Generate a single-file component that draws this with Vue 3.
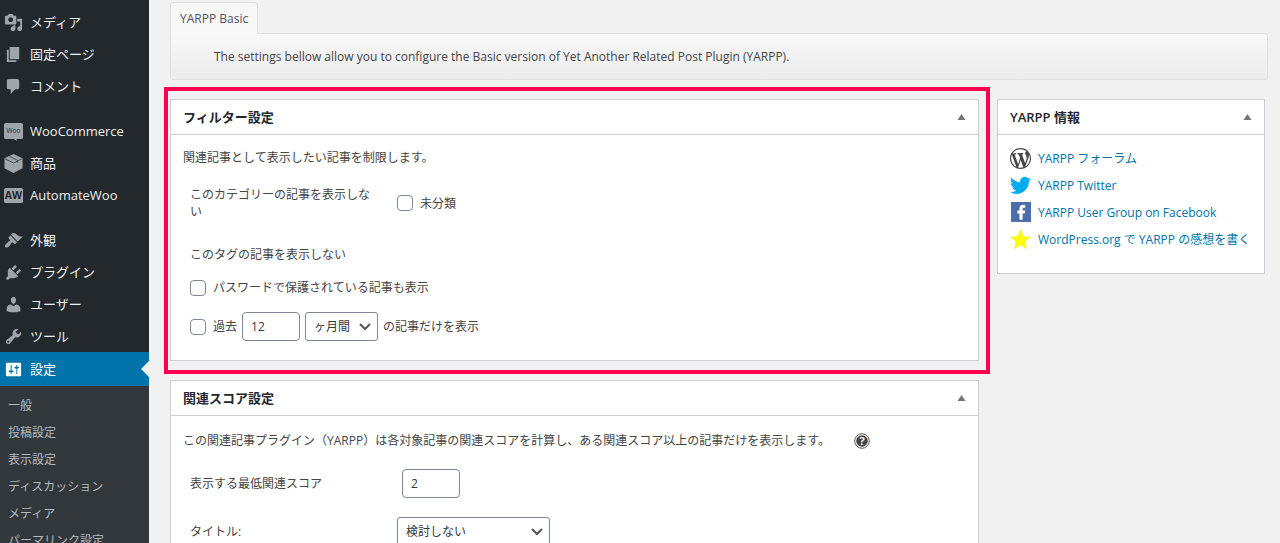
<script setup>
import { ref } from 'vue'

const menuGroups = [
  [
    { label: 'メディア', icon: 'path', d: 'M13 11V4c0-.55-.45-1-1-1h-1.67L9 1H5L3.67 3H2c-.55 0-1 .45-1 1v7c0 .55.45 1 1 1h10c.55 0 1-.45 1-1zM7 4.5c1.38 0 2.5 1.12 2.5 2.5S8.38 9.5 7 9.5 4.5 8.38 4.5 7 5.62 4.5 7 4.5zM14 6h5v10.5c0 1.38-1.12 2.5-2.5 2.5S14 17.88 14 16.5s1.12-2.5 2.5-2.5c.17 0 .34.02.5.05V9h-3V6zm-4 8.05V13h2v3.5c0 1.38-1.12 2.5-2.5 2.5S7 17.88 7 16.5 8.12 14 9.5 14c.17 0 .34.02.5.05z' },
    { label: '固定ページ', icon: 'path', d: 'M6 15V2h10v13H6zm-1 1h8v2H3V5h2v11z' },
    { label: 'コメント', icon: 'path', d: 'M5 2h9c1.1 0 2 .9 2 2v7c0 1.1-.9 2-2 2h-2l-5 5v-5H5c-1.1 0-2-.9-2-2V4c0-1.1.9-2 2-2z' }
  ],
  [
    { label: 'WooCommerce', icon: 'woo' },
    { label: '商品', icon: 'box' },
    { label: 'AutomateWoo', icon: 'aw' }
  ],
  [
    { label: '外観', icon: 'path', d: 'M14.48 11.06L7.41 3.99l1.5-1.5c.5-.56 2.3-.47 3.51.32 1.21.8 1.43 1.28 2.91 2.1 1.18.64 2.45 1.26 4.45.85zm-.71.71L6.7 4.7 4.93 6.47c-.39.39-.39 1.02 0 1.41l1.06 1.06c.39.39.39 1.03 0 1.42-.6.6-1.43 1.11-2.21 1.69-.35.26-.7.53-1.01.84C1.43 14.23.4 16.08 1.4 17.07c.99 1 2.84-.03 4.18-1.36.31-.31.58-.66.85-1.02.57-.78 1.08-1.61 1.69-2.21.39-.39 1.02-.39 1.41 0l1.06 1.06c.39.39 1.02.39 1.41 0z' },
    { label: 'プラグイン', icon: 'path', d: 'M13.11 4.36L9.87 7.6 8 5.73l3.24-3.24c.35-.34 1.05-.2 1.56.32.52.51.66 1.21.31 1.55zm-8 1.77l.91-1.12 9.01 9.01-1.19.84c-.71.71-2.63 1.16-3.82 1.16H6.14L4.9 17.26c-.59.59-1.54.59-2.12 0-.59-.58-.59-1.53 0-2.12l1.24-1.24v-3.88c0-1.13.4-3.19 1.09-3.89zm7.26 3.97l3.24-3.24c.34-.35 1.04-.21 1.55.31.52.51.66 1.21.31 1.55l-3.24 3.25z' },
    { label: 'ユーザー', icon: 'path', d: 'M10 9.25c-2.27 0-2.73-3.44-2.73-3.44C7 4.02 7.82 2 9.97 2c2.16 0 2.98 2.02 2.71 3.81 0 0-.41 3.44-2.68 3.44zm0 2.57L12.72 10c2.39 0 4.52 2.33 4.52 4.53v2.49s-3.65 1.13-7.24 1.13c-3.65 0-7.24-1.13-7.24-1.13v-2.49c0-2.25 1.94-4.48 4.47-4.48z' },
    { label: 'ツール', icon: 'path', d: 'M16.68 9.77c-1.34 1.34-3.3 1.67-4.95.99l-5.41 6.52c-.99.99-2.59.99-3.58 0s-.99-2.59 0-3.57l6.52-5.42c-.68-1.65-.35-3.61.99-4.95 1.28-1.28 3.12-1.62 4.72-1.06l-2.89 2.89 2.82 2.82 2.86-2.87c.53 1.58.18 3.39-1.08 4.65zM3.81 16.21c.4.39 1.04.39 1.43 0 .4-.4.4-1.04 0-1.43-.39-.4-1.03-.4-1.43 0-.39.39-.39 1.03 0 1.43z' },
    { label: '設定', icon: 'path', active: true, d: 'M18 16V4c0-.55-.45-1-1-1H3c-.55 0-1 .45-1 1v12c0 .55.45 1 1 1h14c.55 0 1-.45 1-1zM8 11h1c.55 0 1 .45 1 1s-.45 1-1 1H8v1.5c0 .28-.22.5-.5.5s-.5-.22-.5-.5V13H6c-.55 0-1-.45-1-1s.45-1 1-1h1V5.5c0-.28.22-.5.5-.5s.5.22.5.5V11zm5-2h-1c-.55 0-1-.45-1-1s.45-1 1-1h1V5.5c0-.28.22-.5.5-.5s.5.22.5.5V7h1c.55 0 1 .45 1 1s-.45 1-1 1h-1v5.5c0 .28-.22.5-.5.5s-.5-.22-.5-.5V9z' }
  ]
]

const submenu = ['一般', '投稿設定', '表示設定', 'ディスカッション', 'メディア', 'パーマリンク設定']

const infoLinks = [
  { label: 'YARPP フォーラム', icon: 'wordpress' },
  { label: 'YARPP Twitter', icon: 'twitter' },
  { label: 'YARPP User Group on Facebook', icon: 'facebook' },
  { label: 'WordPress.org で YARPP の感想を書く', icon: 'star' }
]

const months = ref('12')
const unit = ref('ヶ月間')
const threshold = ref('2')
const titleRule = ref('検討しない')
</script>

<template>
  <div class="admin">
    <nav class="sidebar" aria-label="メインメニュー">
      <ul v-for="(group, g) in menuGroups" :key="g" class="menu">
        <li v-for="item in group" :key="item.label">
          <a href="#" class="menu-link" :class="{ active: item.active }">
            <svg class="menu-icon" viewBox="0 0 20 20" aria-hidden="true">
              <path v-if="item.icon === 'path'" :d="item.d" />
              <template v-else-if="item.icon === 'woo'">
                <path d="M2 1h16a2 2 0 0 1 2 2v13a2 2 0 0 1-2 2h-5l1 2-4-2H2a2 2 0 0 1-2-2V3a2 2 0 0 1 2-2z" />
                <text x="10" y="12" class="woo-text">Woo</text>
              </template>
              <template v-else-if="item.icon === 'box'">
                <path d="M10 0l9.500 4.500v10.500L10 20 .5 15V4.500z" />
                <path class="cut" d="M1 5l9 4.500L19 5M6 2.500l8.500 4.300v2.700" />
              </template>
              <template v-else>
                <rect x="0" y="2" width="20" height="16" rx="2" />
                <text x="10" y="14" class="aw-text">AW</text>
              </template>
            </svg>
            <span>{{ item.label }}</span>
          </a>
        </li>
      </ul>
      <ul class="submenu">
        <li v-for="label in submenu" :key="label"><a href="#">{{ label }}</a></li>
      </ul>
    </nav>

    <main class="content">
      <div class="tabs"><a href="#" class="tab">YARPP Basic</a></div>
      <p class="tab-panel">The settings bellow allow you to configure the Basic version of Yet Another Related Post Plugin (YARPP).</p>

      <div class="columns">
        <div class="primary">
          <section class="postbox highlighted">
            <header class="box-head">
              <h2>フィルター設定</h2>
              <button type="button" class="toggle" aria-label="フィルター設定を切り替え">
                <svg viewBox="0 0 8 6"><path d="M4 0l4 6H0z" /></svg>
              </button>
            </header>
            <div class="box-body">
              <p class="intro">関連記事として表示したい記事を制限します。</p>
              <div class="row category">
                <span id="category-label" class="row-label">このカテゴリーの記事を表示しない</span>
                <label class="check" aria-describedby="category-label"><input type="checkbox"><span>未分類</span></label>
              </div>
              <div class="row tag"><span class="row-label">このタグの記事を表示しない</span></div>
              <label class="check password"><input type="checkbox"><span>パスワードで保護されている記事も表示</span></label>
              <div class="recent">
                <label class="check"><input type="checkbox"><span>過去</span></label>
                <input v-model="months" type="text" class="field" aria-label="期間">
                <span class="select unit">
                  <select v-model="unit" aria-label="期間の単位">
                    <option>日間</option><option>週間</option><option>ヶ月間</option>
                  </select>
                  <svg viewBox="0 0 12 8" aria-hidden="true"><path d="M1 1l5 5 5-5" /></svg>
                </span>
                <span>の記事だけを表示</span>
              </div>
            </div>
          </section>

          <section class="postbox">
            <header class="box-head">
              <h2>関連スコア設定</h2>
              <button type="button" class="toggle" aria-label="関連スコア設定を切り替え">
                <svg viewBox="0 0 8 6"><path d="M4 0l4 6H0z" /></svg>
              </button>
            </header>
            <div class="box-body relatedness">
              <p class="intro score">
                この関連記事プラグイン（YARPP）は各対象記事の関連スコアを計算し、ある関連スコア以上の記事だけを表示します。
                <svg class="help" viewBox="0 0 16 16" aria-hidden="true">
                  <circle cx="8" cy="8" r="7.300" fill="#fff" stroke="#555" />
                  <circle cx="8" cy="8" r="5.800" fill="#444" />
                  <text x="8" y="12">?</text>
                </svg>
              </p>
              <div class="row threshold">
                <label class="row-label" for="threshold">表示する最低関連スコア</label>
                <input id="threshold" v-model="threshold" type="text" class="field">
              </div>
              <div class="row">
                <label class="row-label" for="title-rule">タイトル:</label>
                <span class="select rule">
                  <select id="title-rule" v-model="titleRule">
                    <option>検討しない</option><option>検討する</option>
                  </select>
                  <svg viewBox="0 0 12 8" aria-hidden="true"><path d="M1 1l5 5 5-5" /></svg>
                </span>
              </div>
            </div>
          </section>
        </div>

        <aside class="postbox info">
          <header class="box-head">
            <h2>YARPP 情報</h2>
            <button type="button" class="toggle" aria-label="YARPP 情報を切り替え">
              <svg viewBox="0 0 8 6"><path d="M4 0l4 6H0z" /></svg>
            </button>
          </header>
          <ul class="links">
            <li v-for="link in infoLinks" :key="link.label">
              <a href="#">
                <svg v-if="link.icon === 'wordpress'" viewBox="0 0 20 20" fill="#464646" aria-hidden="true"><path d="M20 10c0-5.510-4.490-10-10-10C4.480 0 0 4.490 0 10c0 5.520 4.480 10 10 10 5.510 0 10-4.480 10-10zM7.780 15.370L4.370 6.220c.55-.02 1.170-.08 1.170-.08.5-.06.44-1.130-.06-1.110 0 0-1.450.11-2.370.11-.18 0-.37 0-.58-.01C4.120 2.690 6.870 1.110 10 1.110c2.330 0 4.450.87 6.050 2.340-.68-.11-1.650.39-1.650 1.580 0 .74.45 1.360.9 2.100.35.61.55 1.360.55 2.460 0 1.490-1.400 5-1.400 5l-3.030-8.370c.54-.02.82-.17.82-.17.5-.05.44-1.250-.06-1.220 0 0-1.440.12-2.380.12-.87 0-2.330-.12-2.330-.12-.5-.03-.56 1.200-.06 1.220l.92.08 1.260 3.410zM17.410 10c.24-.64.74-1.870.43-4.250.7 1.290 1.050 2.710 1.050 4.250 0 3.290-1.730 6.240-4.400 7.780.97-2.590 1.940-5.200 2.920-7.780zM6.100 18.090C3.120 16.650 1.110 13.530 1.110 10c0-1.300.23-2.480.72-3.590C3.250 10.300 4.670 14.200 6.100 18.090zm4.030-6.630l2.580 6.980c-.86.29-1.760.45-2.710.45-.79 0-1.570-.11-2.290-.33.81-2.380 1.620-4.740 2.420-7.100z" /></svg>
                <svg v-else-if="link.icon === 'twitter'" viewBox="0 0 24 24" fill="#00aced" aria-hidden="true"><path d="M23.953 4.570a10 10 0 01-2.825.775 4.958 4.958 0 002.163-2.723c-.951.555-2.005.959-3.127 1.184a4.920 4.920 0 00-8.384 4.482C7.690 8.095 4.067 6.130 1.640 3.162a4.822 4.822 0 00-.666 2.475c0 1.710.87 3.213 2.188 4.096a4.904 4.904 0 01-2.228-.616v.06a4.923 4.923 0 003.946 4.827 4.996 4.996 0 01-2.212.085 4.936 4.936 0 004.604 3.417 9.867 9.867 0 01-6.102 2.105c-.39 0-.779-.023-1.170-.067a13.995 13.995 0 007.557 2.209c9.053 0 13.998-7.496 13.998-13.985 0-.21 0-.42-.015-.63A9.935 9.935 0 0024 4.590z" /></svg>
                <svg v-else-if="link.icon === 'facebook'" viewBox="0 0 20 20" aria-hidden="true"><rect x="1" width="19" height="19" fill="#4a6ea9" /><path d="M9 17v-6H7V8h2V6c0-2.500 1.500-3.500 4-3.500h1.500v3H13C12.300 5.500 12 6 12 6.500V8h2.500l-.4 3H12v6z" fill="#fff" /></svg>
                <svg v-else viewBox="0 0 20 20" fill="#ff0" stroke="#eee84a" stroke-width=".5" aria-hidden="true"><path d="M10 .7l2.600 6.500 7 .4-5.400 4.400 1.800 6.900-6-3.800-6 3.800 1.800-6.900L.4 7.600l7-.4z" /></svg>
                <span>{{ link.label }}</span>
              </a>
            </li>
          </ul>
        </aside>
      </div>
    </main>
  </div>
</template>

<style>
body {
  background: #f1f1f1;
}
</style>

<style scoped>
* {
  box-sizing: border-box;
}
.admin {
  display: flex;
  height: 100vh;
  overflow: hidden;
  background: #f1f1f1;
  color: #444;
  font: 12px/17px "Open Sans", "Noto Sans CJK JP", sans-serif;
}
ul, p, h2 {
  margin: 0;
  padding: 0;
  list-style: none;
}
a {
  text-decoration: none;
}
input, select, button {
  margin: 0;
  font: inherit;
}

.sidebar {
  flex: 0 0 149px;
  padding-top: 6px;
  background: #23282d;
}
.menu + .menu {
  margin-top: 13px;
}
.menu-link {
  position: relative;
  display: flex;
  align-items: center;
  gap: 7px;
  height: 32px;
  padding-left: 4px;
  color: #eee;
  font-size: 13px;
}
.menu-icon {
  width: 19px;
  height: 19px;
  fill: #a0a5aa;
}
.menu-icon text {
  fill: #23282d;
  text-anchor: middle;
  font-family: "Open Sans", sans-serif;
}
.woo-text {
  font-size: 7px;
}
.aw-text {
  font-size: 11px;
  font-weight: 700;
}
.menu-icon .cut {
  fill: none;
  stroke: #23282d;
  stroke-width: 0.7;
}
.menu-link.active {
  height: 34px;
  background: #0073aa;
  color: #fff;
}
.menu-link.active .menu-icon {
  fill: #fff;
}
.menu-link.active::after {
  content: "";
  position: absolute;
  top: 9px;
  right: 0;
  border: 8px solid transparent;
  border-left-width: 0;
  border-right-color: #f1f1f1;
}
.submenu {
  padding: 6px 0 8px;
  background: #32373c;
}
.submenu a {
  display: block;
  padding-left: 8px;
  color: #b4b9be;
  line-height: 27px;
}

.content {
  flex: 1;
  min-width: 0;
  padding: 2px 12px 0 21px;
}
.tabs {
  display: flex;
}
.tab {
  z-index: 1;
  margin-bottom: -1px;
  padding: 7px 9px;
  border: 1px solid #dfdfdf;
  border-bottom: 0;
  border-radius: 4px 4px 0 0;
  background: #f8f8f8;
  color: #555;
}
.tab-panel {
  padding: 14px 43px;
  border: 1px solid #dfdfdf;
  border-radius: 0 3px 3px 3px;
  background: linear-gradient(#f8f8f8, #ececec);
}
.columns {
  display: flex;
  align-items: flex-start;
  gap: 18px;
  margin: 19px 3px 0 0;
}
.primary {
  flex: 1;
  display: flex;
  flex-direction: column;
  gap: 19px;
  min-width: 0;
}
.postbox {
  position: relative;
  border: 1px solid #ccd0d4;
  background: #fff;
}
.highlighted::after {
  content: "";
  position: absolute;
  inset: -13px -12px -14px -7px;
  border: 4px solid #ff0050;
  pointer-events: none;
}
.box-head {
  display: flex;
  align-items: center;
  justify-content: space-between;
  height: 35px;
  padding: 0 12px;
  border-bottom: 1px solid #ccd0d4;
}
h2 {
  color: #23282d;
  font-size: 13px;
  font-weight: 600;
}
.toggle {
  display: flex;
  padding: 0;
  border: 0;
  background: none;
}
.toggle svg {
  width: 9px;
  height: 6px;
  fill: #72777c;
}
.box-body {
  padding: 14px 12px 19px;
}
.box-body.relatedness {
  padding-top: 16px;
}
.row {
  display: grid;
  grid-template-columns: 190px 1fr;
  gap: 17px;
  padding-left: 7px;
}
.category {
  margin-top: 20px;
}
.tag {
  margin-top: 26px;
}
.check {
  display: flex;
  align-items: center;
  gap: 7px;
}
.check input {
  appearance: none;
  width: 16px;
  height: 16px;
  border: 1px solid #7e8993;
  border-radius: 4px;
  background: #fff;
}
.check input:checked {
  background: #0073aa;
}
.category .check {
  align-self: center;
}
.password {
  margin: 16px 0 0 7px;
}
.recent {
  display: flex;
  align-items: center;
  gap: 5px;
  margin: 16px 0 0 7px;
}
.field {
  width: 58px;
  height: 29px;
  padding: 0 8px;
  border: 1px solid #7e8993;
  border-radius: 4px;
  background: #fff;
  color: #32373c;
}
.select {
  position: relative;
  display: block;
}
.select select {
  appearance: none;
  width: 100%;
  height: 29px;
  padding: 0 8px;
  border: 1px solid #7e8993;
  border-radius: 3px;
  background: #fff;
  color: #32373c;
}
.select svg {
  position: absolute;
  top: 11px;
  right: 7px;
  width: 12px;
  height: 8px;
  fill: none;
  stroke: #555;
  stroke-width: 2;
  pointer-events: none;
}
.unit {
  width: 73px;
}
.rule {
  width: 153px;
}
.score {
  display: flex;
  align-items: center;
  gap: 24px;
}
.help {
  width: 16px;
  height: 16px;
}
.help text {
  fill: #fff;
  font: 700 11px "Open Sans", sans-serif;
  text-anchor: middle;
}
.threshold {
  margin: 20px 0 19px;
}
.threshold .field {
  margin-left: 5px;
}
.threshold, .threshold + .row {
  align-items: center;
}

.info {
  flex: 0 0 268px;
}
.links {
  padding: 10px 12px 20px;
}
.links a {
  display: flex;
  align-items: center;
  gap: 7px;
  height: 27px;
  color: #0073aa;
}
.links svg {
  width: 21px;
  height: 21px;
}
</style>
